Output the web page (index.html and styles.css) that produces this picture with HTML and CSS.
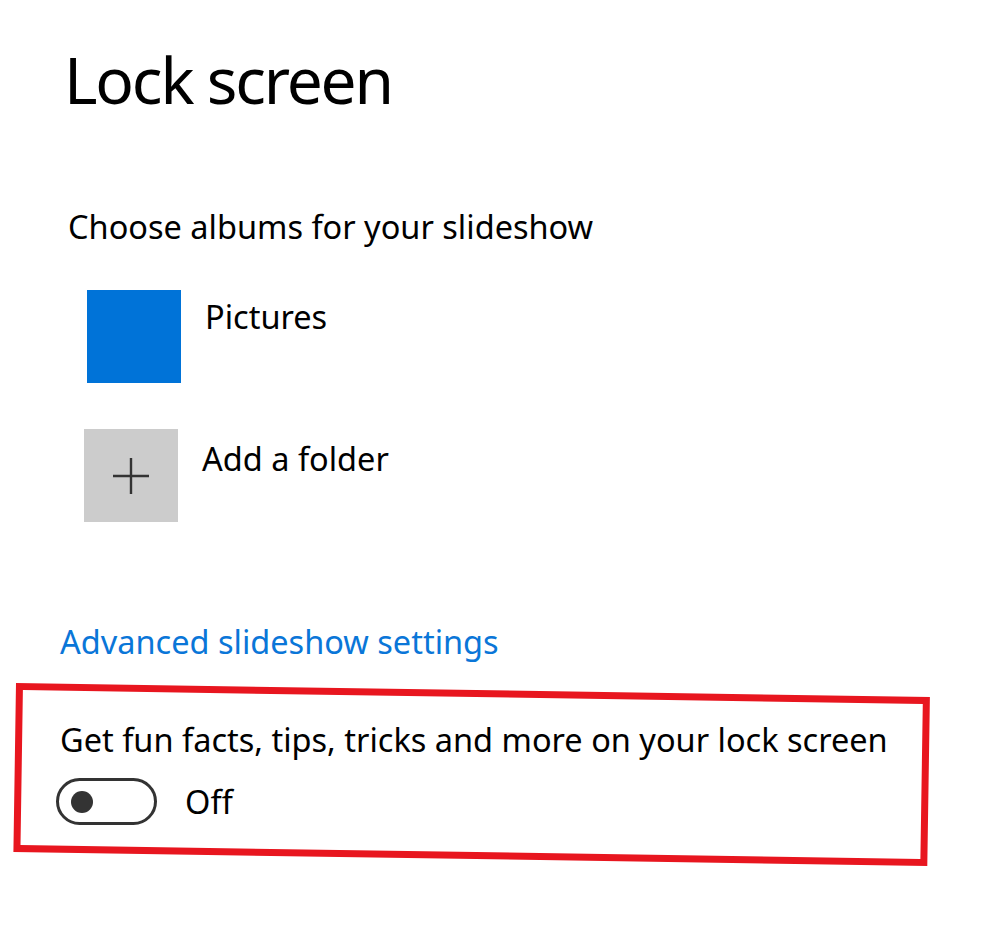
FILE: index.html
```html
<!DOCTYPE html>
<html lang="en">
<head>
    <meta charset="UTF-8">
    <title>Lock screen</title>
    <link rel="stylesheet" href="styles.css">
</head>
<body>
    <div class="page">
        <h1 class="title">Lock screen</h1>
        <p class="label">Choose albums for your slideshow</p>
        <div class="album album-pictures">
            <div class="thumb thumb-blue"></div>
            <span class="album-name">Pictures</span>
        </div>
        <div class="album album-add">
            <div class="thumb thumb-add">
                <svg width="40" height="40" viewBox="0 0 40 40"><path d="M20 2V38M2 20H38" stroke="#333" stroke-width="2.4" fill="none"/></svg>
            </div>
            <span class="album-name">Add a folder</span>
        </div>
        <a class="link" href="#">Advanced slideshow settings</a>
        <div class="highlight">
            <p class="option">Get fun facts, tips, tricks and more on your lock screen</p>
            <div class="toggle-row">
                <span class="toggle"><span class="knob"></span></span>
                <span class="state">Off</span>
            </div>
        </div>
    </div>
</body>
</html>
```

FILE: styles.css
```css
* {
    margin: 0;
    padding: 0;
}
body {
    background: #fff;
    color: #000;
    font-family: "Noto Sans", "Open Sans", sans-serif;
}
.page {
    padding: 40px 0 60px 0;
}
.title {
    font-weight: 400;
    font-size: 64px;
    letter-spacing: -2.2px;
    line-height: 80px;
    margin-left: 64px;
}
.label {
    font-size: 32.5px;
    line-height: 40px;
    margin: 87px 0 0 68px;
}
.album {
    display: flex;
    align-items: flex-start;
    gap: 24px;
}
.album-pictures {
    margin: 43px 0 0 87px;
}
.album-add {
    margin: 46px 0 0 84px;
}
.thumb {
    width: 94px;
    height: 93px;
    display: flex;
    align-items: center;
    justify-content: center;
}
.thumb-blue {
    background: #0073d8;
}
.thumb-add {
    background: #cccccc;
}
.album-name {
    font-size: 32.5px;
    line-height: 40px;
    margin-top: 7px;
}
.album-add .album-name {
    margin-top: 10px;
}
.link {
    display: block;
    color: #0a76d8;
    text-decoration: none;
    font-size: 32.5px;
    line-height: 40px;
    margin: 100px 0 0 60px;
}
.highlight {
    position: relative;
    margin: 21px 0 0 16px;
    width: 914px;
    box-sizing: border-box;
    padding: 37px 0 27px 44px;
}
/* red marker drawn over the option, slightly tilted */
.highlight::before {
    content: "";
    position: absolute;
    left: 0;
    top: 0;
    right: 0;
    bottom: 0;
    border: 7px solid #e8161f;
    transform: rotate(0.88deg);
    transform-origin: left top;
}
.option {
    font-size: 32.5px;
    line-height: 40px;
}
.toggle-row {
    display: flex;
    align-items: center;
    gap: 28px;
    margin-top: 18px;
    margin-left: -4px;
}
.toggle {
    width: 101px;
    height: 47px;
    border: 3px solid #333;
    border-radius: 24px;
    box-sizing: border-box;
    display: flex;
    align-items: center;
    padding-left: 12px;
}
.knob {
    width: 22px;
    height: 22px;
    border-radius: 50%;
    background: #333;
}
.state {
    font-size: 32.5px;
    line-height: 40px;
}
```
